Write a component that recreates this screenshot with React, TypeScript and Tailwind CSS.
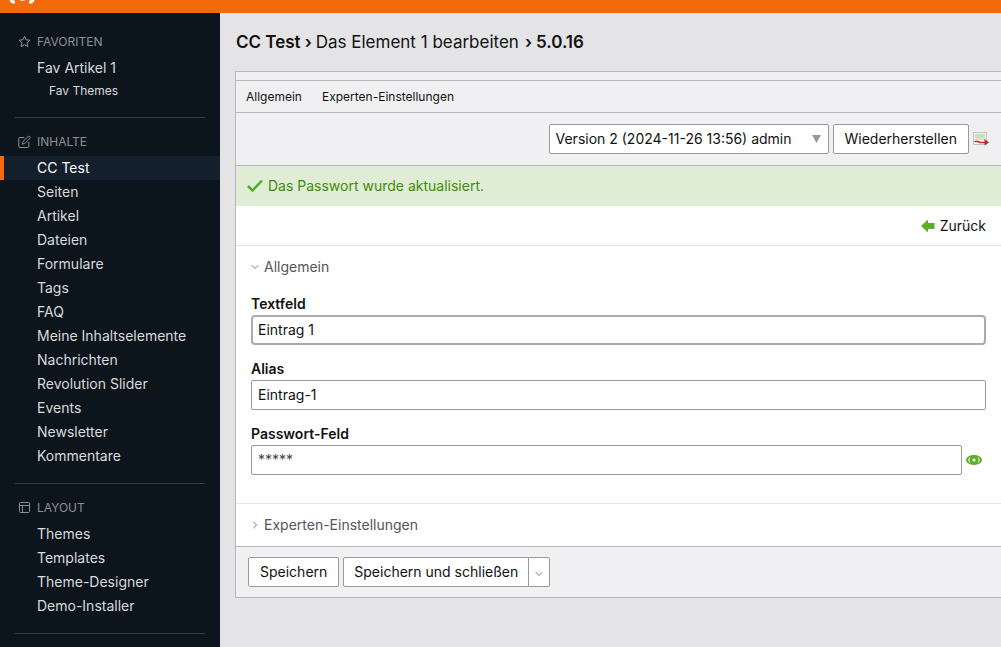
import React, { useState } from 'react';

interface NavItem {
  label: string;
  active?: boolean;
  nested?: boolean;
}

interface NavGroupProps {
  title: string;
  icon: React.ReactNode;
  items: NavItem[];
}

const favorites: NavItem[] = [
  { label: 'Fav Artikel 1' },
  { label: 'Fav Themes', nested: true },
];

const contents: NavItem[] = [
  { label: 'CC Test', active: true },
  { label: 'Seiten' },
  { label: 'Artikel' },
  { label: 'Dateien' },
  { label: 'Formulare' },
  { label: 'Tags' },
  { label: 'FAQ' },
  { label: 'Meine Inhaltselemente' },
  { label: 'Nachrichten' },
  { label: 'Revolution Slider' },
  { label: 'Events' },
  { label: 'Newsletter' },
  { label: 'Kommentare' },
];

const layout: NavItem[] = [
  { label: 'Themes' },
  { label: 'Templates' },
  { label: 'Theme-Designer' },
  { label: 'Demo-Installer' },
];

const StarIcon = () => (
  <svg width="14" height="14" viewBox="0 0 14 14" fill="none" stroke="currentColor" strokeLinejoin="round">
    <path d="M6.500 1.300l1.600 3.500 3.900.4-2.900 2.600.8 3.900-3.400-2-3.400 2 .8-3.900L1 5.200l3.900-.4z" />
  </svg>
);

const EditIcon = () => (
  <svg width="14" height="14" viewBox="0 0 14 14" fill="none" stroke="currentColor" strokeLinejoin="round" strokeLinecap="round">
    <path d="M6 2.500H2a1.200 1.200 0 0 0-1.200 1.200v7.600A1.200 1.200 0 0 0 2 12.500h7.600a1.200 1.200 0 0 0 1.200-1.200v-4" />
    <path d="M9.800 1.700a1.300 1.300 0 0 1 1.900 1.900L6.800 8.500l-2.500.7.700-2.500z" />
  </svg>
);

const LayoutIcon = () => (
  <svg width="14" height="14" viewBox="0 0 14 14" fill="none" stroke="currentColor">
    <rect x="1.500" y="1.500" width="10" height="10" rx="1" />
    <path d="M1.500 4.500h10M4.500 4.500v7" />
  </svg>
);

const Chevron = ({ open }: { open: boolean }) => (
  <svg width="8" height="8" viewBox="0 0 8 8" fill="none" stroke="#777" strokeLinecap="round">
    <path d={open ? 'M1 2.500l3 3 3-3' : 'M2.500 1l3 3-3 3'} />
  </svg>
);

const NavGroup = ({ title, icon, items }: NavGroupProps) => (
  <section className="pt-3">
    <h2 className="mb-0.5 flex h-6 items-center gap-[5px] pl-[18px] text-xs text-[#8b9096]">
      {icon}
      {title}
    </h2>
    <ul>
      {items.map(item => (
        <li key={item.label}>
          <a
            href="#"
            className={`flex items-center border-l-4 ${item.nested ? 'h-[22px] pl-[45px] text-xs' : 'h-6 pl-[33px] text-sm'} ${
              item.active ? 'border-[#f26a0a] bg-[#13202c] text-white' : 'border-transparent text-[#d8dadc]'
            }`}
          >
            {item.label}
          </a>
        </li>
      ))}
    </ul>
    <hr className="mx-[15px] mt-[15px] border-[#343a41]" />
  </section>
);

const Legend = ({ label, open, onToggle }: { label: string; open: boolean; onToggle: () => void }) => (
  <button type="button" aria-expanded={open} onClick={onToggle} className="flex h-[42px] items-center gap-[5px] text-sm text-[#555]">
    <Chevron open={open} />
    {label}
  </button>
);

const buttonClass = 'h-[30px] border border-[#999] bg-white text-sm text-[#111]';
const inputClass = 'h-[30px] w-full min-w-0 bg-white text-sm text-[#111] outline-none placeholder:text-[#444]';

export default function App() {
  const [generalOpen, setGeneralOpen] = useState(true);
  const [expertOpen, setExpertOpen] = useState(false);

  return (
    <div className="flex h-screen flex-col overflow-hidden bg-[#e4e4e6] font-['Inter','Liberation_Sans',sans-serif] text-[#111]">
      <header className="h-[13px] shrink-0 bg-[#f26a0a] pl-[9px]">
        <svg width="27" height="5" viewBox="0 0 27 5" fill="none" stroke="#fff" strokeWidth="3" aria-label="Contao" role="img">
          <path d="M2-1Q2 2 6 2.200M24-1Q24 2 20 2.200" />
          <path d="M11.500 0h4" strokeWidth="1.500" />
        </svg>
      </header>

      <div className="flex min-h-0 flex-1">
        <nav className="w-[220px] shrink-0 overflow-hidden bg-[#0d151c] pt-[5px]">
          <NavGroup title="FAVORITEN" icon={<StarIcon />} items={favorites} />
          <NavGroup title="INHALTE" icon={<EditIcon />} items={contents} />
          <NavGroup title="LAYOUT" icon={<LayoutIcon />} items={layout} />
        </nav>

        <main className="min-w-0 flex-1 pl-[15px]">
          <h1 className="flex h-[58px] items-center gap-1 pt-0.5 pl-px text-[17px] whitespace-nowrap">
            <span className="font-semibold">CC Test</span>
            <span className="font-semibold">›</span>
            <span className="mr-0.5">Das Element 1 bearbeiten</span>
            <span className="font-semibold">›</span>
            <span className="font-semibold">5.0.16</span>
          </h1>

          <form className="border-y border-l border-[#b7b7bb] bg-[#f0f0f2]" onSubmit={e => e.preventDefault()}>
            <div className="h-2" />
            <div className="flex h-[33px] items-center gap-5 border-y border-[#b7b7bb] pl-2.5 text-xs">
              <a href="#general">Allgemein</a>
              <a href="#expert">Experten-Einstellungen</a>
            </div>

            <div className="flex h-[53px] items-center justify-end gap-1 border-b border-[#b7b7bb] pr-3">
              <div className="relative w-[280px]">
                <select
                  aria-label="Version"
                  className="h-[30px] w-full appearance-none rounded-xs border border-[#999] bg-white pl-1.5 text-sm"
                >
                  <option>Version 2 (2024-11-26 13:56) admin</option>
                </select>
                <svg className="pointer-events-none absolute top-[11px] right-2 fill-[#999]" width="9" height="8" viewBox="0 0 9 8">
                  <path d="M0 0h9L4.500 8z" />
                </svg>
              </div>
              <button type="button" className={`${buttonClass} rounded-xs px-[11px]`}>Wiederherstellen</button>
              <button type="button" aria-label="Unterschiede anzeigen">
                <svg width="16" height="16" viewBox="0 0 16 16" fill="none">
                  <path d="M.5 1.500h13v12H.5z" fill="#f3f5f0" stroke="#bfc4bf" />
                  <path d="M2 4h10M2 6h10" stroke="#9fca86" />
                  <path d="M2 8h10" stroke="#b9d3ab" />
                  <path d="M1.500 10.500h4l1 1H13" stroke="#c1292e" strokeWidth="1.500" />
                  <path d="M11.500 8l4.500 3.500-4.500 3z" fill="#c1292e" />
                </svg>
              </button>
            </div>

            <p className="flex h-10 items-center gap-[5px] bg-[#e0edd5] pl-[11px] text-sm text-[#3f8c0d]">
              <svg width="16" height="14" viewBox="0 0 16 14" fill="none" stroke="#56ab31" strokeWidth="2.500">
                <path d="M1 7l4.500 4.500L15 1.500" />
              </svg>
              Das Passwort wurde aktualisiert.
            </p>

            <div className="bg-white">
              <div className="flex h-10 items-center justify-end border-b border-[#e3e3e3] pr-[15px]">
                <a href="#" className="flex items-center gap-[5px] text-sm">
                  <svg width="14" height="14" viewBox="0 0 14 14" fill="#5fae27">
                    <path d="M0 7l7-6.500V4h6.500v6H7v3.500z" />
                  </svg>
                  Zurück
                </a>
              </div>

              <section id="general" className="px-[15px]">
                <Legend label="Allgemein" open={generalOpen} onToggle={() => setGeneralOpen(!generalOpen)} />
                {generalOpen && (
                  <div className="flex flex-col gap-[15px] pt-[7px] pb-7">
                    <div>
                      <label htmlFor="text" className="block h-5 text-sm/[18px] font-semibold">Textfeld</label>
                      <input id="text" defaultValue="Eintrag 1" className={`${inputClass} rounded border-2 border-[#aaa] px-[5px] pb-0.5`} />
                    </div>
                    <div>
                      <label htmlFor="alias" className="block h-5 text-sm/[18px] font-semibold">Alias</label>
                      <input id="alias" defaultValue="Eintrag-1" className={`${inputClass} rounded-xs border border-[#999] px-1.5 pb-0.5`} />
                    </div>
                    <div>
                      <label htmlFor="password" className="block h-5 text-sm/[18px] font-semibold">Passwort-Feld</label>
                      <div className="flex items-center gap-1">
                        <input
                          id="password"
                          type="password"
                          placeholder="*****"
                          className={`${inputClass} rounded-xs border border-[#999] px-1.5 pb-0.5`}
                        />
                        <button type="button" aria-label="Passwort anzeigen" className="mr-1 shrink-0">
                          <svg width="16" height="12" viewBox="0 0 16 12" fill="none">
                            <ellipse cx="8" cy="6" rx="8" ry="5" fill="#5fae27" />
                            <path d="M3.800 3.500Q1.500 6 3.800 8.500M12.200 3.500Q14.500 6 12.200 8.500" stroke="#fff" />
                            <circle cx="8" cy="6" r="1.600" fill="#fff" />
                          </svg>
                        </button>
                      </div>
                    </div>
                  </div>
                )}
              </section>

              <section id="expert" className="border-t border-[#e3e3e3] px-[15px]">
                <Legend label="Experten-Einstellungen" open={expertOpen} onToggle={() => setExpertOpen(!expertOpen)} />
              </section>
            </div>

            <div className="flex h-[51px] items-center gap-1 border-t border-[#b7b7bb] pl-3">
              <button type="submit" className={`${buttonClass} rounded-xs px-[11px]`}>Speichern</button>
              <div className="flex">
                <button type="submit" className={`${buttonClass} rounded-l-xs px-2.5`}>Speichern und schließen</button>
                <button
                  type="button"
                  aria-label="Weitere Aktionen"
                  className="flex h-[30px] w-[21px] items-center justify-center rounded-r-xs border border-l-0 border-[#999] bg-white pt-1"
                >
                  <Chevron open />
                </button>
              </div>
            </div>
          </form>
        </main>
      </div>
    </div>
  );
}
